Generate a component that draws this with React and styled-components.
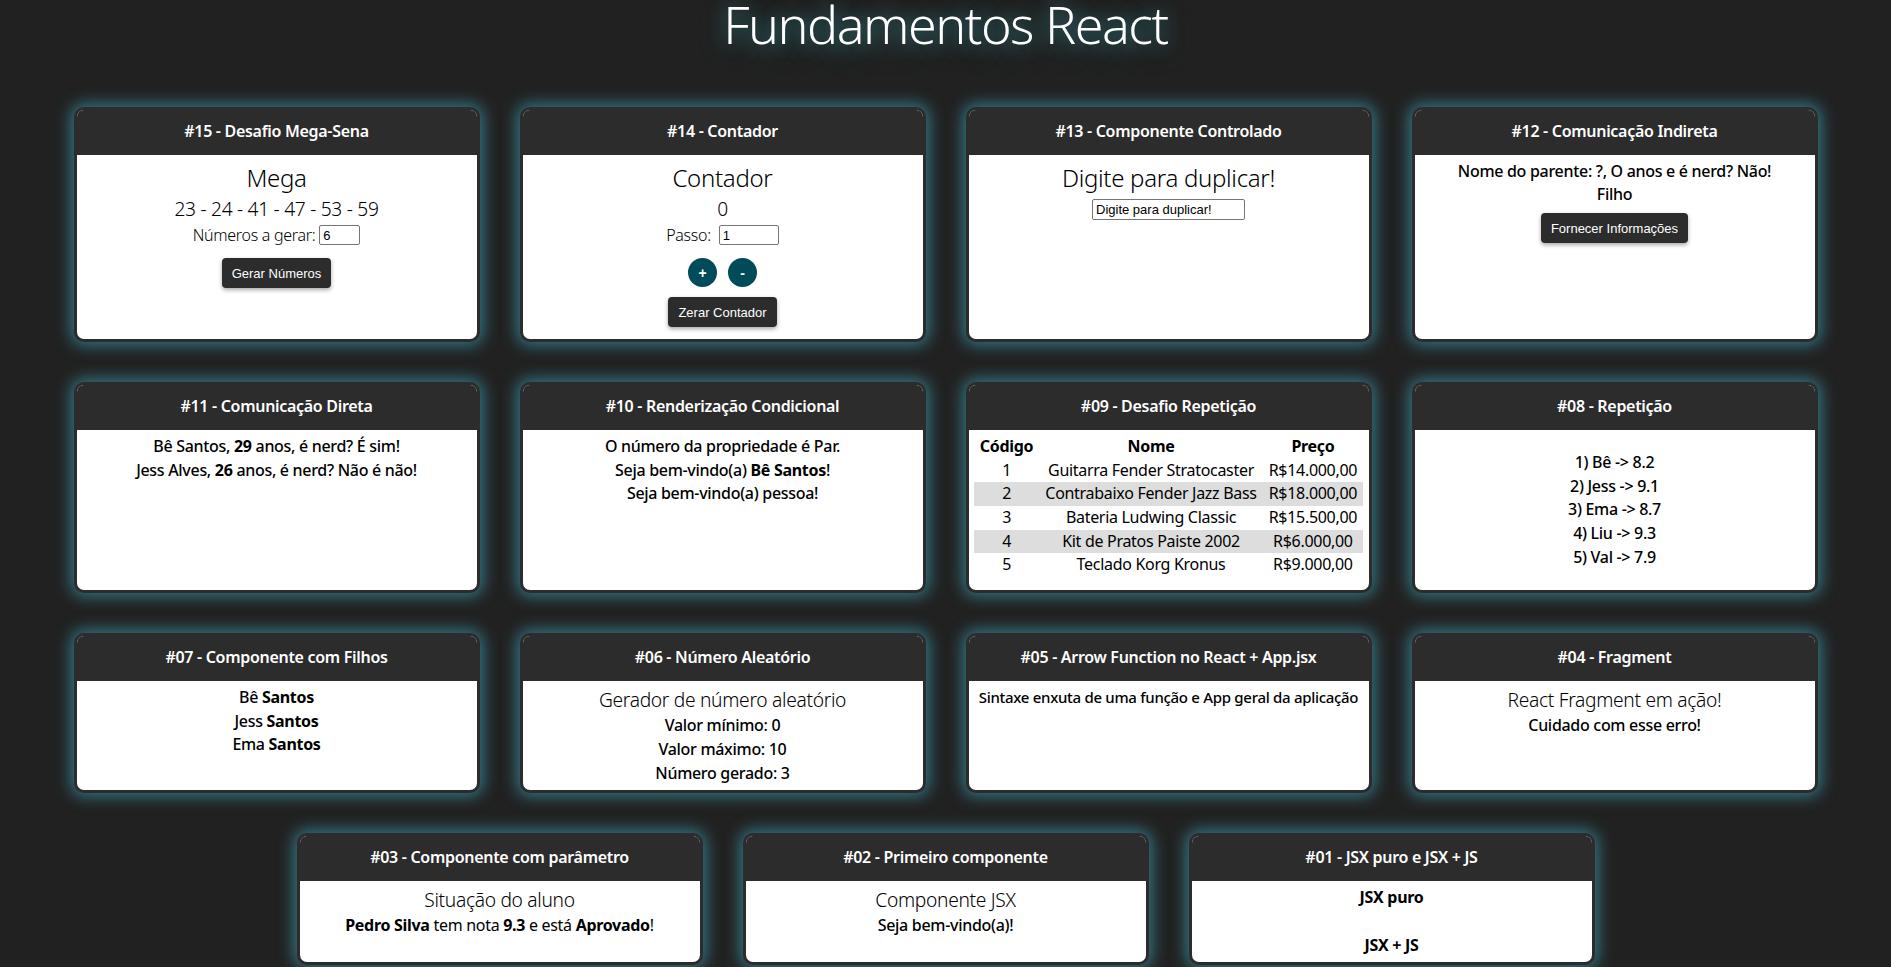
import React from 'react';
import styled, { createGlobalStyle } from 'styled-components';

const GlobalStyle = createGlobalStyle`
  body {
    margin: 0;
    background-color: #212121;
    font-family: "Noto Sans", "DejaVu Sans Condensed", sans-serif;
    letter-spacing: -0.3px;
    color: #000;
  }
`;

const Page = styled.div`
  min-height: 100vh;
`;

const Title = styled.h1`
  margin: 0;
  text-align: center;
  font-size: 52px;
  line-height: 48px;
  font-weight: 300;
  letter-spacing: -1.5px;
  color: #fff;
  text-shadow: 0 0 18px rgba(70, 190, 210, 0.55), 0 6px 30px rgba(70, 190, 210, 0.35);
`;

const Grid = styled.div`
  display: flex;
  flex-wrap: wrap;
  justify-content: center;
  padding-top: 39px;
`;

const CardBox = styled.div`
  box-sizing: border-box;
  width: 406px;
  margin: 20px;
  display: flex;
  flex-direction: column;
  border: 3px solid #2c2c2c;
  border-radius: 10px;
  overflow: hidden;
  background-color: #fff;
  box-shadow: 0 0 16px 3px rgba(62, 160, 180, 0.7);
`;

const CardHeader = styled.div`
  background-color: #2c2c2c;
  color: #fff;
  text-align: center;
  font-size: 16px;
  font-weight: 600;
  line-height: 1.48;
  padding: 10px 10px 11px;
`;

const CardBody = styled.div`
  flex: 1;
  display: flex;
  flex-direction: column;
  align-items: center;
  padding: 5px;
  text-align: center;
  font-size: 16px;
  line-height: 1.48;
`;

const Line = styled.p`
  margin: 0;
  font-size: ${({ $size }) => $size || '16px'};
  font-weight: ${({ $weight }) => $weight || 500};
  margin-top: ${({ $gap }) => $gap || '0'};
  white-space: nowrap;

  b {
    font-weight: 700;
  }
`;

const InputRow = styled.div`
  display: flex;
  align-items: center;
  gap: ${({ $gap }) => $gap || '4px'};
`;

const TextInput = styled.input`
  box-sizing: border-box;
  width: ${({ $width }) => $width};
  height: ${({ $height }) => $height || '20px'};
  margin-top: ${({ $top }) => $top || '0'};
  padding: 1px 3px;
  font-family: "Liberation Sans", Arial, sans-serif;
  font-size: 13px;
  letter-spacing: 0;
  color: #000;
  border: 1px solid #767676;
  border-radius: 2px;
  background: #fff;
`;

const Button = styled.button`
  height: 30px;
  margin-top: ${({ $top }) => $top || '11px'};
  margin-bottom: ${({ $bottom }) => $bottom || '0'};
  padding: 0 10px;
  background-color: #2c2c2c;
  color: #fff;
  font-family: "Liberation Sans", Arial, sans-serif;
  font-size: 13px;
  letter-spacing: 0;
  border: none;
  border-radius: 4px;
  box-shadow: 0 2px 4px rgba(0, 0, 0, 0.35);
  cursor: pointer;
`;

const RoundRow = styled.div`
  display: flex;
  gap: 11px;
  margin-top: 11px;
`;

const RoundButton = styled.button`
  width: 29px;
  height: 29px;
  padding: 0;
  border: none;
  border-radius: 50%;
  background-color: #004b5a;
  color: #fff;
  font-family: "Liberation Sans", Arial, sans-serif;
  font-size: 14px;
  font-weight: 700;
  cursor: pointer;
`;

const Table = styled.table`
  border-collapse: collapse;
  font-size: 16px;
  line-height: 1.48;
  white-space: nowrap;

  th {
    font-weight: 700;
  }

  td {
    font-weight: 400;
  }

  th, td {
    padding: 0 6px;
    text-align: center;
  }

  tbody tr:nth-child(even) {
    background-color: #dddddd;
  }
`;

const List = styled.ul`
  list-style: none;
  margin: 16px 0;
  padding: 0;
  font-weight: 500;
`;

function Card({ title, children }) {
  return (
    <CardBox>
      <CardHeader>{title}</CardHeader>
      <CardBody>{children}</CardBody>
    </CardBox>
  );
}

const produtos = [
  { id: 1, nome: 'Guitarra Fender Stratocaster', preco: 'R$14.000,00' },
  { id: 2, nome: 'Contrabaixo Fender Jazz Bass', preco: 'R$18.000,00' },
  { id: 3, nome: 'Bateria Ludwing Classic', preco: 'R$15.500,00' },
  { id: 4, nome: 'Kit de Pratos Paiste 2002', preco: 'R$6.000,00' },
  { id: 5, nome: 'Teclado Korg Kronus', preco: 'R$9.000,00' },
];

const alunos = [
  { id: 1, nome: 'Bê', nota: 8.2 },
  { id: 2, nome: 'Jess', nota: 9.1 },
  { id: 3, nome: 'Ema', nota: 8.7 },
  { id: 4, nome: 'Liu', nota: 9.3 },
  { id: 5, nome: 'Val', nota: 7.9 },
];

export default function App() {
  return (
    <Page>
      <GlobalStyle />
      <Title>Fundamentos React</Title>
      <Grid>
        <Card title="#15 - Desafio Mega-Sena">
          <Line $size="24px" $weight={300}>Mega</Line>
          <Line $size="19.2px" $weight={300}>23 - 24 - 41 - 47 - 53 - 59</Line>
          <InputRow>
            <Line $weight={300}>Números a gerar:</Line>
            <TextInput $width="41px" defaultValue="6" />
          </InputRow>
          <Button>Gerar Números</Button>
        </Card>

        <Card title="#14 - Contador">
          <Line $size="24px" $weight={300}>Contador</Line>
          <Line $size="19.2px" $weight={300}>0</Line>
          <InputRow $gap="8px">
            <Line $weight={300}>Passo:</Line>
            <TextInput $width="60px" defaultValue="1" />
          </InputRow>
          <RoundRow>
            <RoundButton>+</RoundButton>
            <RoundButton>-</RoundButton>
          </RoundRow>
          <Button $top="10px" $bottom="7px">Zerar Contador</Button>
        </Card>

        <Card title="#13 - Componente Controlado">
          <Line $size="24px" $weight={300}>Digite para duplicar!</Line>
          <TextInput $width="153px" $height="21px" $top="4px" defaultValue="Digite para duplicar!" />
        </Card>

        <Card title="#12 - Comunicação Indireta">
          <Line>Nome do parente: ?, O anos e é nerd? Não!</Line>
          <Line>Filho</Line>
          <Button $top="6px">Fornecer Informações</Button>
        </Card>

        <Card title="#11 - Comunicação Direta">
          <Line>Bê Santos, <b>29</b> anos, é nerd? É sim!</Line>
          <Line>Jess Alves, <b>26</b> anos, é nerd? Não é não!</Line>
        </Card>

        <Card title="#10 - Renderização Condicional">
          <Line>O número da propriedade é Par.</Line>
          <Line>Seja bem-vindo(a) <b>Bê Santos</b>!</Line>
          <Line>Seja bem-vindo(a) pessoa!</Line>
        </Card>

        <Card title="#09 - Desafio Repetição">
          <Table>
            <thead>
              <tr>
                <th>Código</th>
                <th>Nome</th>
                <th>Preço</th>
              </tr>
            </thead>
            <tbody>
              {produtos.map((p) => (
                <tr key={p.id}>
                  <td>{p.id}</td>
                  <td>{p.nome}</td>
                  <td>{p.preco}</td>
                </tr>
              ))}
            </tbody>
          </Table>
        </Card>

        <Card title="#08 - Repetição">
          <List>
            {alunos.map((a) => (
              <li key={a.id}>{a.id}) {a.nome} -&gt; {a.nota}</li>
            ))}
          </List>
        </Card>

        <Card title="#07 - Componente com Filhos">
          <Line>Bê <b>Santos</b></Line>
          <Line>Jess <b>Santos</b></Line>
          <Line>Ema <b>Santos</b></Line>
        </Card>

        <Card title="#06 - Número Aleatório">
          <Line $size="19.2px" $weight={300}>Gerador de número aleatório</Line>
          <Line>Valor mínimo: 0</Line>
          <Line>Valor máximo: 10</Line>
          <Line>Número gerado: 3</Line>
        </Card>

        <Card title="#05 - Arrow Function no React + App.jsx">
          <Line $size="15px">Sintaxe enxuta de uma função e App geral da aplicação</Line>
        </Card>

        <Card title="#04 - Fragment">
          <Line $size="19.2px" $weight={300}>React Fragment em ação!</Line>
          <Line>Cuidado com esse erro!</Line>
        </Card>

        <Card title="#03 - Componente com parâmetro">
          <Line $size="19.2px" $weight={300}>Situação do aluno</Line>
          <Line $weight={400}><b>Pedro Silva</b> tem nota <b>9.3</b> e está <b>Aprovado</b>!</Line>
        </Card>

        <Card title="#02 - Primeiro componente">
          <Line $size="19.2px" $weight={300}>Componente JSX</Line>
          <Line>Seja bem-vindo(a)!</Line>
        </Card>

        <Card title="#01 - JSX puro e JSX + JS">
          <Line $weight={700}>JSX puro</Line>
          <Line $weight={700} $gap="24px">JSX + JS</Line>
        </Card>
      </Grid>
    </Page>
  );
}
